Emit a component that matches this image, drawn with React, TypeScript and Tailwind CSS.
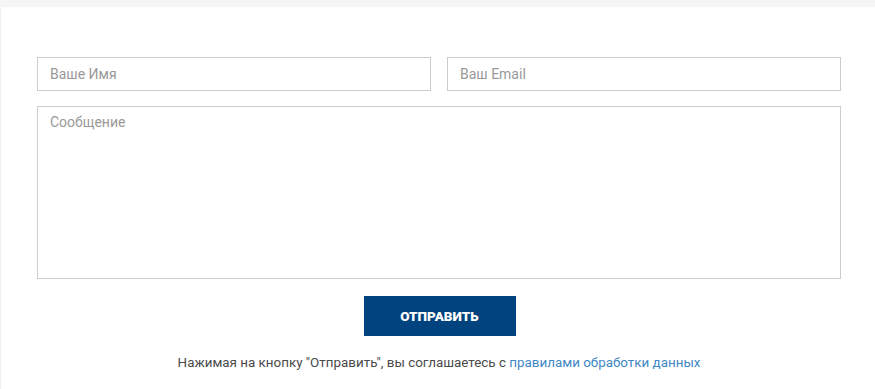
import React from 'react';

const font = { fontFamily: 'Roboto, "Liberation Sans", sans-serif' };

function App() {
  return (
    <div className="min-h-[389px] bg-white" style={font}>
      <div className="h-[7px] bg-[#f5f5f5]" />
      <div className="border-l border-[#f0f0f0] pl-[36px] pt-[50px] pb-4">
        <form className="flex w-[804px] flex-col">
          <div className="flex gap-[16px]">
            <input
              type="text"
              placeholder="Ваше Имя"
              className="h-[34px] flex-1 border border-[#cccccc] px-[12px] text-[14px] text-[#555] outline-none placeholder:text-[#999]"
            />
            <input
              type="email"
              placeholder="Ваш Email"
              className="h-[34px] flex-1 border border-[#cccccc] px-[12px] text-[14px] text-[#555] outline-none placeholder:text-[#999]"
            />
          </div>
          <textarea
            placeholder="Сообщение"
            className="mt-[15px] h-[173px] resize-none border border-[#cccccc] px-[12px] pt-[5px] text-[14px] text-[#555] outline-none placeholder:text-[#999]"
          />
          <div className="mt-[17px] flex justify-center">
            <button
              type="button"
              className="ml-[1px] h-[40px] w-[152px] bg-[#00437e] text-[13.5px] font-black uppercase text-white"
            >
              Отправить
            </button>
          </div>
          <p className="mt-[17px] text-center text-[13.4px] leading-[20px] text-[#4a4a4a]">
            Нажимая на кнопку "Отправить", вы соглашаетесь с{' '}
            <a href="#" className="text-[#3f88c5]">
              правилами обработки данных
            </a>
          </p>
        </form>
      </div>
    </div>
  );
}

export default App;
